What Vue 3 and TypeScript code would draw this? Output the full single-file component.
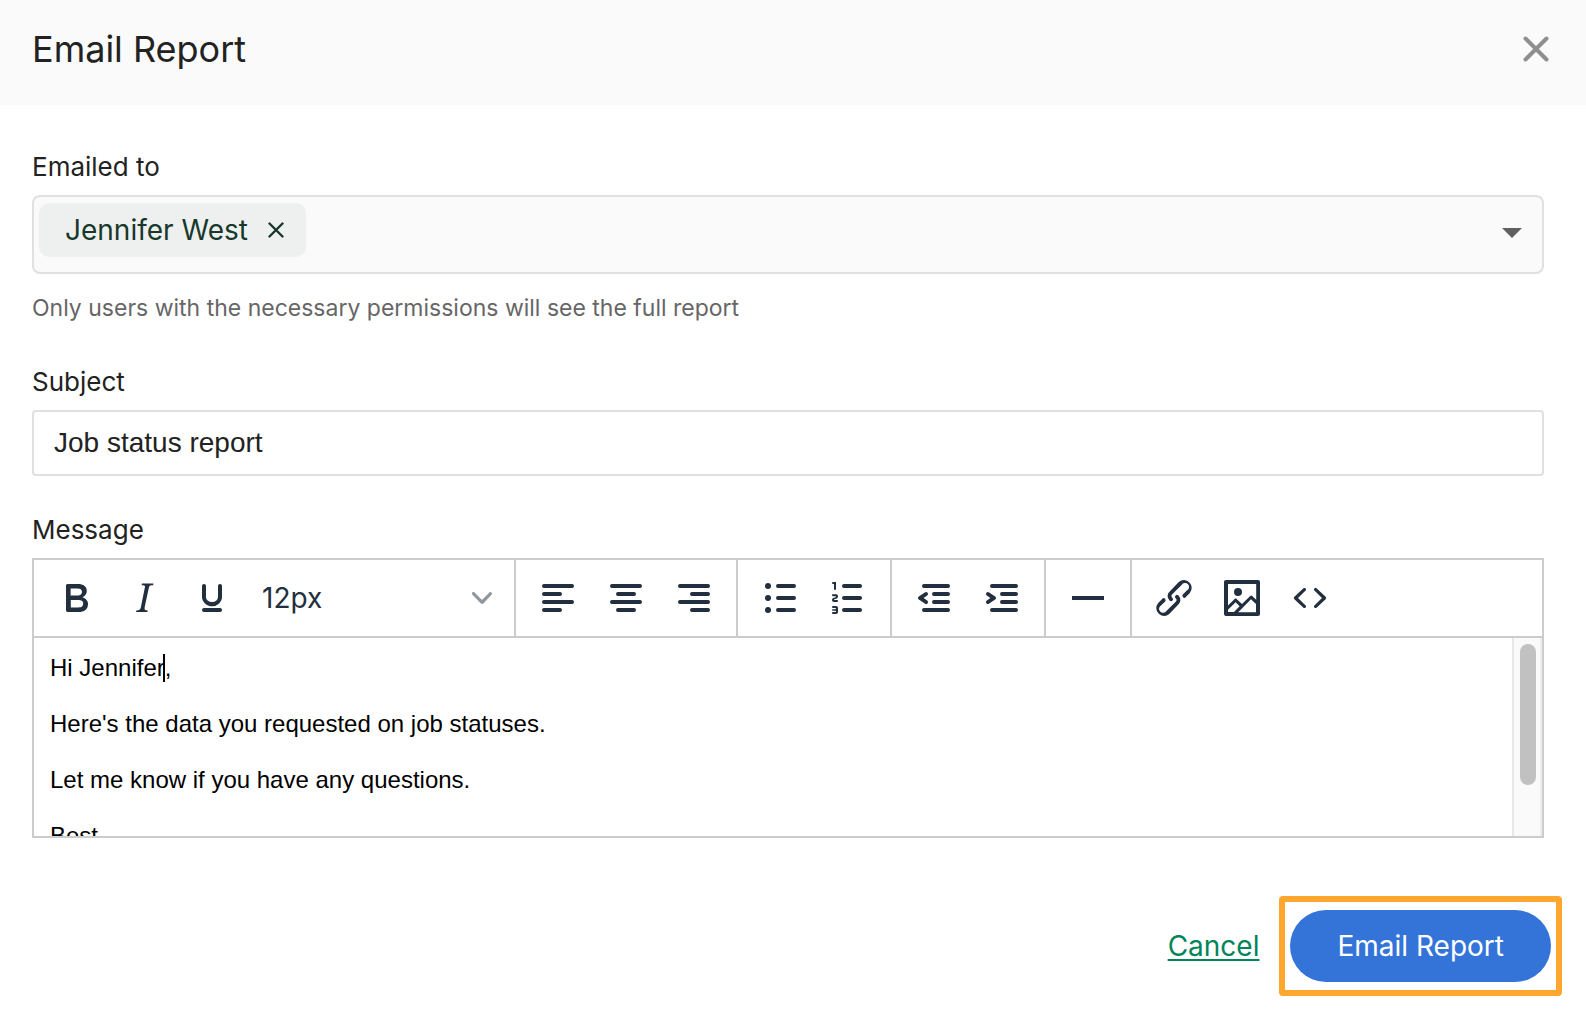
<script setup lang="ts">
import { ref } from 'vue'

interface Tool {
  label: string
  path: string
}

const recipients = ref<string[]>(['Jennifer West'])
const search = ref('')
const subject = ref('Job status report')
const fontSize = ref('12px')
const fontSizes = ['10px', '12px', '14px', '18px', '24px']

function removeRecipient(name: string) {
  recipients.value = recipients.value.filter((r) => r !== name)
}

const textTools: Tool[] = [
  {
    label: 'Bold',
    path: 'M7.8 19c-.3 0-.5 0-.6-.2l-.2-.5V5.7c0-.2 0-.4.2-.5l.6-.2h5c1.5 0 2.7.3 3.5 1 .7.6 1.1 1.4 1.1 2.5a3 3 0 0 1-.6 1.9c-.4.6-1 1-1.6 1.2.4.1.9.3 1.3.6s.8.7 1 1.2c.4.4.5 1 .5 1.6 0 1.3-.4 2.3-1.3 3-.8.7-2.1 1-3.8 1H7.8zm5-8.3c.6 0 1.2-.1 1.6-.5.4-.3.6-.7.6-1.3 0-1.1-.8-1.7-2.3-1.7H9.3v3.5h3.4zm.5 6c.7 0 1.3-.1 1.7-.4.4-.4.6-.9.6-1.5s-.2-1-.7-1.4c-.4-.3-1-.4-2-.4H9.4v3.8h4z',
  },
  {
    label: 'Italic',
    path: 'M16.7 4.7l-.1.9h-.3c-.6 0-1 0-1.4.3-.3.3-.4.6-.5 1.1l-2.1 9.8v.6c0 .5.4.8 1.4.8h.2l-.2.8H8l.2-.8h.2c1.1 0 1.8-.5 2-1.5l2-9.8.1-.5c0-.6-.4-.8-1.4-.8h-.3l.2-.9h5.8z',
  },
  {
    label: 'Underline',
    path: 'M16 5c.6 0 1 .4 1 1v5.5a4 4 0 0 1-.4 1.8l-1 1.4a5.3 5.3 0 0 1-5.5 1 5 5 0 0 1-1.6-1c-.5-.4-.8-.9-1.1-1.4a4 4 0 0 1-.4-1.8V6c0-.6.4-1 1-1s1 .4 1 1v5.5c0 .3 0 .6.2 1l.6.7a3.3 3.3 0 0 0 2.2.8 3.4 3.4 0 0 0 2.2-.8c.3-.2.4-.5.6-.8l.2-.9V6c0-.6.4-1 1-1zM8 17h8c.6 0 1 .4 1 1s-.4 1-1 1H8a1 1 0 0 1 0-2z',
  },
]

const toolGroups: Tool[][] = [
  [
    {
      label: 'Align left',
      path: 'M5 5h14a1 1 0 0 1 0 2H5a1 1 0 1 1 0-2zm0 4h8a1 1 0 0 1 0 2H5a1 1 0 1 1 0-2zm0 8h8a1 1 0 0 1 0 2H5a1 1 0 0 1 0-2zm0-4h14a1 1 0 0 1 0 2H5a1 1 0 0 1 0-2z',
    },
    {
      label: 'Align center',
      path: 'M5 5h14a1 1 0 0 1 0 2H5a1 1 0 1 1 0-2zm3 4h8a1 1 0 0 1 0 2H8a1 1 0 1 1 0-2zm0 8h8a1 1 0 0 1 0 2H8a1 1 0 0 1 0-2zm-3-4h14a1 1 0 0 1 0 2H5a1 1 0 0 1 0-2z',
    },
    {
      label: 'Align right',
      path: 'M5 5h14a1 1 0 0 1 0 2H5a1 1 0 1 1 0-2zm6 4h8a1 1 0 0 1 0 2h-8a1 1 0 0 1 0-2zm0 8h8a1 1 0 0 1 0 2h-8a1 1 0 0 1 0-2zm-6-4h14a1 1 0 0 1 0 2H5a1 1 0 0 1 0-2z',
    },
  ],
  [
    {
      label: 'Bullet list',
      path: 'M11 5h8a1 1 0 0 1 0 2h-8a1 1 0 0 1 0-2zm0 6h8a1 1 0 0 1 0 2h-8a1 1 0 0 1 0-2zm0 6h8a1 1 0 0 1 0 2h-8a1 1 0 0 1 0-2zM4.500 6a1.500 1.500 0 1 1 3 0 1.500 1.500 0 0 1-3 0zm0 6a1.500 1.500 0 1 1 3 0 1.500 1.500 0 0 1-3 0zm0 6a1.500 1.500 0 1 1 3 0 1.500 1.500 0 0 1-3 0z',
    },
    {
      label: 'Numbered list',
      path: 'M10 17h8c.6 0 1 .4 1 1s-.4 1-1 1h-8a1 1 0 0 1 0-2zm0-6h8c.6 0 1 .4 1 1s-.4 1-1 1h-8a1 1 0 0 1 0-2zm0-6h8c.6 0 1 .4 1 1s-.4 1-1 1h-8a1 1 0 1 1 0-2zM6 4v3.5c0 .3-.2.5-.5.5a.5.5 0 0 1-.5-.5V5h-.5a.5.5 0 0 1 0-1H6zm-1 8.8l.2.2h1.3c.3 0 .5.2.5.5s-.2.5-.5.5H4.900a1 1 0 0 1-.9-1V13c0-.4.3-.8.6-1l1.200-.4.2-.3a.2.2 0 0 0-.2-.2H4.500a.5.5 0 0 1-.5-.5c0-.3.2-.5.5-.5h1.600c.5 0 .9.4.9 1v.1c0 .4-.3.8-.6 1l-1.200.4-.2.3zM7 17v2c0 .6-.4 1-1 1H4.500a.5.5 0 0 1 0-1h1.200c.2 0 .3-.1.3-.3 0-.2-.1-.3-.3-.3H4.400a.4.4 0 1 1 0-.8h1.300c.2 0 .3-.1.3-.3 0-.2-.1-.3-.3-.3H4.500a.5.5 0 1 1 0-1H6c.6 0 1 .4 1 1z',
    },
  ],
  [
    {
      label: 'Decrease indent',
      path: 'M7 5h12a1 1 0 0 1 0 2H7a1 1 0 1 1 0-2zm5 4h7a1 1 0 0 1 0 2h-7a1 1 0 0 1 0-2zm0 4h7a1 1 0 0 1 0 2h-7a1 1 0 0 1 0-2zm-5 4h12a1 1 0 0 1 0 2H7a1 1 0 0 1 0-2zm1.600-3.800a1 1 0 0 1-1.200 1.600l-3-2a1 1 0 0 1 0-1.600l3-2a1 1 0 0 1 1.200 1.600L6.800 12l1.800 1.200z',
    },
    {
      label: 'Increase indent',
      path: 'M7 5h12a1 1 0 0 1 0 2H7a1 1 0 1 1 0-2zm5 4h7a1 1 0 0 1 0 2h-7a1 1 0 0 1 0-2zm0 4h7a1 1 0 0 1 0 2h-7a1 1 0 0 1 0-2zm-5 4h12a1 1 0 0 1 0 2H7a1 1 0 0 1 0-2zm-2.600-3.800L6.200 12l-1.800-1.200a1 1 0 0 1 1.200-1.600l3 2a1 1 0 0 1 0 1.600l-3 2a1 1 0 1 1-1.200-1.600z',
    },
  ],
  [{ label: 'Horizontal line', path: 'M4 11h16v2H4z' }],
  [
    {
      label: 'Insert link',
      path: 'M6.200 12.300a1 1 0 0 1 1.400 1.400l-2.100 2a2 2 0 1 0 2.700 2.800l4.800-4.800a1 1 0 0 0 0-1.400 1 1 0 1 1 1.400-1.300 2.900 2.900 0 0 1 0 4L9.600 20a3.900 3.900 0 0 1-5.500-5.500l2-2zm11.600-.6a1 1 0 0 1-1.400-1.400l2-2a2 2 0 1 0-2.600-2.800L11 10.300a1 1 0 0 0 0 1.400A1 1 0 1 1 9.600 13a2.900 2.900 0 0 1 0-4L14.400 4a3.900 3.900 0 0 1 5.500 5.500l-2 2z',
    },
    {
      label: 'Insert image',
      path: 'M5 15.700l3.300-3.200c.3-.3.7-.3 1 0L12 15l4.100-4c.3-.4.8-.4 1 0l2 1.900V5H5v10.700zM5 18V19h3l2.800-2.900-2-2L5 17.900zm14-3l-2.500-2.400-6.400 6.500H19v-4zM4 3h16c.6 0 1 .4 1 1v16c0 .6-.4 1-1 1H4a1 1 0 0 1-1-1V4c0-.6.4-1 1-1zm6 8a2 2 0 1 0 0-4 2 2 0 0 0 0 4z',
    },
    {
      label: 'Source code',
      path: 'M9.800 15.700c.3.3.3.8 0 1-.3.4-.9.4-1.200 0l-4.400-4.100a.8.8 0 0 1 0-1.200l4.400-4.200c.3-.3.9-.3 1.200 0 .3.3.3.8 0 1.100L6 12l3.800 3.700zM14.200 15.700c-.3.3-.3.8 0 1 .4.4.9.4 1.200 0l4.400-4.100c.3-.3.3-.9 0-1.200l-4.400-4.200a.8.8 0 0 0-1.200 0c-.3.3-.3.8 0 1.100L18 12l-3.800 3.700z',
    },
  ],
]
</script>

<template>
  <form class="dialog" role="dialog" aria-labelledby="dialog-title" @submit.prevent>
    <header class="header">
      <h1 id="dialog-title" class="title">Email Report</h1>
      <button type="button" class="close" aria-label="Close">
        <svg width="26" height="26" viewBox="0 0 26 26" fill="none" stroke="#8f8f8f" stroke-width="4" stroke-linecap="round">
          <path d="M2.500 2.500l21 21M23.500 2.500l-21 21" />
        </svg>
      </button>
    </header>

    <main class="content">
      <div class="field">
        <label class="label" for="recipients">Emailed to</label>
        <div class="picker">
          <span v-for="name in recipients" :key="name" class="chip">
            {{ name }}
            <button type="button" class="chip-remove" :aria-label="`Remove ${name}`" @click="removeRecipient(name)">
              <svg width="16" height="16" viewBox="0 0 16 16" fill="none" stroke="#17382b" stroke-width="2.400" stroke-linecap="round">
                <path d="M1.500 1.500l13 13M14.500 1.500l-13 13" />
              </svg>
            </button>
          </span>
          <input id="recipients" v-model="search" class="picker-input" type="text" autocomplete="off" />
          <button type="button" class="picker-toggle" aria-label="Show users">
            <svg width="20" height="10" viewBox="0 0 20 10" fill="#616161"><path d="M0 0h20L10 10z" /></svg>
          </button>
        </div>
        <p class="hint">Only users with the necessary permissions will see the full report</p>
      </div>

      <div class="field subject">
        <label class="label" for="subject">Subject</label>
        <input id="subject" v-model="subject" class="text-input" type="text" />
      </div>

      <div class="field message">
        <label id="message-label" class="label" for="message">Message</label>
        <div class="editor">
          <div class="toolbar" role="toolbar" aria-label="Formatting">
            <div class="group">
              <button v-for="tool in textTools" :key="tool.label" type="button" class="tool" :aria-label="tool.label">
                <svg width="48" height="48" viewBox="0 0 24 24"><path fill-rule="evenodd" :d="tool.path" /></svg>
              </button>
              <div class="size">
                <select v-model="fontSize" class="size-select" aria-label="Font size">
                  <option v-for="s in fontSizes" :key="s">{{ s }}</option>
                </select>
                <svg class="size-arrow" width="20" height="20" viewBox="0 0 10 10">
                  <path d="M8.700 2.200c.3-.3.8-.3 1 0 .4.4.4.9 0 1.200L5.700 7.800c-.3.3-.9.3-1.200 0L.2 3.400a.8.8 0 0 1 0-1.200c.3-.3.8-.3 1.100 0L5 6l3.700-3.800z" />
                </svg>
              </div>
            </div>
            <div v-for="(group, i) in toolGroups" :key="i" class="group">
              <button v-for="tool in group" :key="tool.label" type="button" class="tool" :aria-label="tool.label">
                <svg width="48" height="48" viewBox="0 0 24 24"><path fill-rule="evenodd" :d="tool.path" /></svg>
              </button>
            </div>
          </div>
          <div class="editing">
            <div id="message" class="document" role="textbox" aria-multiline="true" aria-labelledby="message-label" contenteditable="true" spellcheck="false">
              <p>Hi Jennifer<span class="caret"></span>,</p>
              <p>Here's the data you requested on job statuses.</p>
              <p>Let me know if you have any questions.</p>
              <p>Best,</p>
            </div>
            <div class="track" aria-hidden="true"><div class="thumb"></div></div>
          </div>
        </div>
      </div>
    </main>

    <footer class="footer">
      <a href="#" class="cancel">Cancel</a>
      <div class="highlight">
        <button type="submit" class="submit">Email Report</button>
      </div>
    </footer>
  </form>
</template>

<style>
body {
  margin: 0;
  background: #fff;
}
</style>

<style scoped>
.dialog {
  font-family: Inter, sans-serif;
  color: #222;
}
button {
  display: flex;
  align-items: center;
  justify-content: center;
  padding: 0;
  border: 0;
  background: none;
  cursor: pointer;
}
input,
select {
  box-sizing: border-box;
  margin: 0;
  border: 0;
  outline: 0;
  background: none;
}
.header {
  display: flex;
  align-items: center;
  justify-content: space-between;
  padding: 27px 32px 34px 32px;
  background: #fafafa;
}
.title {
  margin: 0;
  font-size: 36px;
  font-weight: 400;
  line-height: 44px;
}
.close {
  width: 36px;
  height: 36px;
}
.content {
  padding: 46px 42px 0 32px;
}
.field {
  display: flex;
  flex-direction: column;
}
.subject {
  margin-top: 42px;
}
.message {
  margin-top: 38px;
}
.label {
  margin-bottom: 12px;
  font-size: 26px;
  line-height: 32px;
}
.picker {
  display: flex;
  align-items: flex-start;
  box-sizing: border-box;
  min-height: 79px;
  padding: 6px 5px;
  border: 2px solid #e0e0e0;
  border-radius: 8px;
  background: #fafafa;
}
.chip {
  display: flex;
  align-items: center;
  gap: 14px;
  box-sizing: border-box;
  height: 54px;
  padding: 0 16px 0 26px;
  border-radius: 10px;
  background: #eef0ef;
  color: #17382b;
  font-size: 28px;
  line-height: 54px;
}
.chip-remove {
  width: 28px;
  height: 28px;
}
.picker-input {
  flex: 1;
  min-width: 0;
  height: 60px;
  padding: 0 12px;
  font: 28px/32px Inter, sans-serif;
}
.picker-toggle {
  width: 50px;
  height: 60px;
}
.hint {
  margin: 18px 0 0;
  color: #666;
  font-size: 23px;
  line-height: 32px;
}
.text-input {
  width: 100%;
  height: 66px;
  padding: 0 20px;
  border: 2px solid #e0e0e0;
  border-radius: 4px;
  color: #222;
  font: 28px/32px "Liberation Sans", sans-serif;
}
.editor {
  border: 2px solid #ccc;
}
.toolbar {
  display: flex;
  border-bottom: 2px solid #ccc;
}
.group {
  display: flex;
  align-items: center;
  height: 76px;
  padding: 0 8px;
  border-right: 2px solid #ccc;
}
.group:last-child {
  border-right: 0;
}
.tool {
  width: 68px;
  height: 68px;
}
.tool svg {
  fill: #222f3e;
}
.size {
  display: flex;
  align-items: center;
  position: relative;
}
.size-select {
  width: 260px;
  height: 68px;
  padding: 0 48px 0 16px;
  appearance: none;
  color: #222f3e;
  font: 28px/32px Inter, sans-serif;
}
.size-arrow {
  position: absolute;
  right: 14px;
  fill: #222f3e;
  opacity: 0.5;
  pointer-events: none;
}
.editing {
  display: flex;
  height: 198px;
}
.document {
  flex: 1;
  box-sizing: border-box;
  padding: 14px 16px;
  overflow-y: auto;
  scrollbar-width: none;
  outline: 0;
  color: #000;
  font: 24px/32px "Liberation Sans", sans-serif;
}
.document p {
  margin: 0 0 24px;
}
.caret {
  position: absolute;
  width: 2px;
  height: 28px;
  margin: 2px 0 0 -2px;
  background: #000;
}
.track {
  box-sizing: border-box;
  width: 30px;
  padding: 6px 4px 6px 6px;
  border-right: 2px solid #ededed;
  border-left: 2px solid #e8e8e8;
  background: #fafafa;
}
.thumb {
  width: 16px;
  height: 141px;
  border-radius: 8px;
  background: #c1c1c1;
}
.footer {
  display: flex;
  align-items: center;
  justify-content: flex-end;
  gap: 20px;
  padding: 58px 24px 20px;
}
.cancel {
  color: #00855a;
  font-size: 28px;
  line-height: 32px;
  text-decoration: underline;
  text-decoration-thickness: 2px;
  text-underline-offset: 3px;
}
.highlight {
  padding: 8px 5px;
  border: 6px solid #ffa62f;
  border-radius: 4px;
}
.submit {
  height: 72px;
  padding: 0 47px;
  border-radius: 36px;
  background: #3474d9;
  color: #fff;
  font: 28px/32px Inter, sans-serif;
}
</style>
